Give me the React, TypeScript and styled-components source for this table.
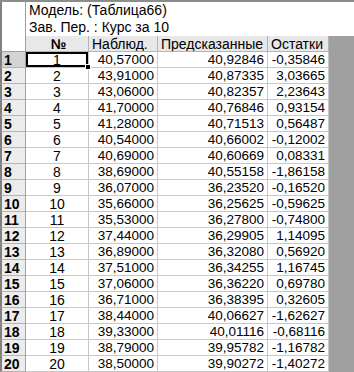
import React from "react";
import styled, { createGlobalStyle } from "styled-components";

const Global = createGlobalStyle`
  html, body { margin: 0; padding: 0; background: #a0a0a0; }
  body { font-family: "Liberation Sans", Arial, sans-serif; font-size: 13px; }
`;

const Sheet = styled.div`
  display: grid;
  grid-template-columns: 26px 63px 69px 110px 61px 1fr;
  grid-template-rows: 17px 17px 16px;
  grid-auto-rows: 16px;
  width: 354px;
  height: 372px;
  overflow: hidden;
  background: #a0a0a0;
  border-top: 2px solid #8c8c8c;
  box-sizing: border-box;
  color: #000;
  line-height: 16px;
`;

const Corner = styled.div`
  grid-column: 1;
  grid-row: 1 / span 3;
  background: #fff;
  border-left: 2px solid #808080;
  border-right: 1px solid #a0a0a0;
  border-bottom: 1px solid #a0a0a0;
`;

const Title = styled.div<{ $row: number }>`
  grid-column: 2 / span 5;
  grid-row: ${(p) => p.$row};
  background: #fff;
  padding-left: 3px;
  font-size: 14px;
  line-height: 17px;
  white-space: nowrap;
`;

const Head = styled.div<{ $center?: boolean; $bold?: boolean }>`
  background: #e8e8e8;
  border-right: 1px solid #b4b4b4;
  border-bottom: 1px solid #b4b4b4;
  padding-left: 3px;
  font-size: 14px;
  text-align: ${(p) => (p.$center ? "center" : "left")};
  font-weight: ${(p) => (p.$bold ? "bold" : "normal")};
  white-space: nowrap;
  overflow: hidden;
`;

const Filler = styled.div`
  background: #a0a0a0;
`;

const RowHead = styled.div<{ $active?: boolean }>`
  background: ${(p) => (p.$active ? "#d4d4d4" : "#ececec")};
  border-left: 2px solid #808080;
  border-right: 1px solid #a0a0a0;
  border-bottom: 1px solid #b4b4b4;
  padding-left: 2px;
  font-size: 14px;
  font-weight: bold;
`;

const Cell = styled.div<{ $center?: boolean; $selected?: boolean }>`
  position: relative;
  background: #fff;
  border-right: 1px solid #c8c8c8;
  border-bottom: 1px solid #c8c8c8;
  text-align: ${(p) => (p.$center ? "center" : "right")};
  padding-right: ${(p) => (p.$center ? "0" : "3px")};
  font-size: ${(p) => (p.$center ? "14px" : "13.5px")};
  white-space: nowrap;
  overflow: ${(p) => (p.$selected ? "visible" : "hidden")};
  ${(p) =>
    p.$selected &&
    `
    box-shadow: inset 0 0 0 2px #000;
    z-index: 1;
    &::after {
      content: "";
      position: absolute;
      right: -3px;
      bottom: -3px;
      width: 4px;
      height: 4px;
      background: #000;
      border: 1px solid #fff;
    }
  `}
`;

const rows: [string, string, string][] = [
  ["40,57000", "40,92846", "-0,35846"],
  ["43,91000", "40,87335", "3,03665"],
  ["43,06000", "40,82357", "2,23643"],
  ["41,70000", "40,76846", "0,93154"],
  ["41,28000", "40,71513", "0,56487"],
  ["40,54000", "40,66002", "-0,12002"],
  ["40,69000", "40,60669", "0,08331"],
  ["38,69000", "40,55158", "-1,86158"],
  ["36,07000", "36,23520", "-0,16520"],
  ["35,66000", "36,25625", "-0,59625"],
  ["35,53000", "36,27800", "-0,74800"],
  ["37,44000", "36,29905", "1,14095"],
  ["36,89000", "36,32080", "0,56920"],
  ["37,51000", "36,34255", "1,16745"],
  ["37,06000", "36,36220", "0,69780"],
  ["36,71000", "36,38395", "0,32605"],
  ["38,44000", "40,06627", "-1,62627"],
  ["39,33000", "40,01116", "-0,68116"],
  ["38,79000", "39,95782", "-1,16782"],
  ["38,50000", "39,90272", "-1,40272"],
];

export default function App() {
  return (
    <>
      <Global />
      <Sheet>
        <Corner />
        <Title $row={1}>Модель: (Таблица66)</Title>
        <Title $row={2}>Зав. Пер. : Курс за 10</Title>
        <Head $center $bold>
          №
        </Head>
        <Head>Наблюд.</Head>
        <Head>Предсказанные</Head>
        <Head>Остатки</Head>
        <Filler />
        {rows.map((r, i) => (
          <React.Fragment key={i}>
            <RowHead $active={i === 0}>{i + 1}</RowHead>
            <Cell $center $selected={i === 0}>
              {i + 1}
            </Cell>
            <Cell>{r[0]}</Cell>
            <Cell>{r[1]}</Cell>
            <Cell>{r[2]}</Cell>
            <Filler />
          </React.Fragment>
        ))}
      </Sheet>
    </>
  );
}
